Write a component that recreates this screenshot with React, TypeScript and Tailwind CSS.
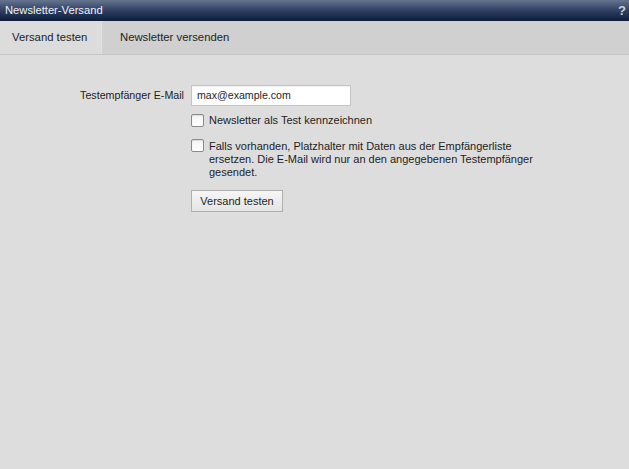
import React from "react";

function Checkbox() {
  return (
    <span className="inline-block h-[13px] w-[13px] shrink-0 rounded-[2px] border border-[#8a8a8a] bg-gradient-to-b from-[#f4f4f4] to-[#ffffff] shadow-[inset_0_1px_1px_rgba(0,0,0,0.1)]" />
  );
}

export default function App() {
  return (
    <div
      className="flex h-[469px] w-[629px] flex-col bg-[#dddddd] text-[11px] text-[#1e1e1e]"
      style={{ fontFamily: '"Liberation Sans", Arial, sans-serif' }}
    >
      <div className="flex h-[21px] items-center justify-between bg-gradient-to-b from-[#66758f] via-[#2f4062] to-[#0d1c3a] pl-[5px] pr-[3px] text-[11.2px] text-[#eef2f7]">
        <span className="leading-[21px]">Newsletter-Versand</span>
        <span className="text-[13px] font-bold text-[#c9d1dd]">?</span>
      </div>
      <div className="flex h-[34px] border-b border-[#c6c6c6] bg-[#d0d0d0] text-[11.3px]">
        <div className="flex w-[101px] items-center bg-[#dcdcdc] pl-[12px]">Versand testen</div>
        <div className="flex items-center border-l border-[#e2e2e2] pl-[18px]">Newsletter versenden</div>
      </div>
      <div className="pt-[30px]">
        <div className="flex items-center">
          <div className="w-[184px] text-right text-[10.7px]">Testempfänger E-Mail</div>
          <div className="ml-[7px] flex h-[21px] w-[160px] items-center border border-[#c4c4c4] bg-white pl-[5px] text-[10.6px] shadow-[inset_0_1px_1px_rgba(0,0,0,0.06)]">
            max@example.com
          </div>
        </div>
        <div className="ml-[191px] mt-[8px] flex items-center gap-[5px] leading-[13px]">
          <Checkbox />
          <span>Newsletter als Test kennzeichnen</span>
        </div>
        <div className="ml-[191px] mt-[12px] flex items-start gap-[5px] leading-[13px]">
          <Checkbox />
          <span className="w-[328px] pt-[1px]">
            Falls vorhanden, Platzhalter mit Daten aus der Empfängerliste ersetzen. Die E-Mail wird nur an den angegebenen Testempfänger gesendet.
          </span>
        </div>
        <div className="ml-[191px] mt-[11px]">
          <button className="flex h-[22px] w-[92px] items-center justify-center border border-[#b0b0b0] bg-gradient-to-b from-[#f6f6f6] to-[#e4e4e4] text-[11px] text-[#1e1e1e]">
            Versand testen
          </button>
        </div>
      </div>
    </div>
  );
}
